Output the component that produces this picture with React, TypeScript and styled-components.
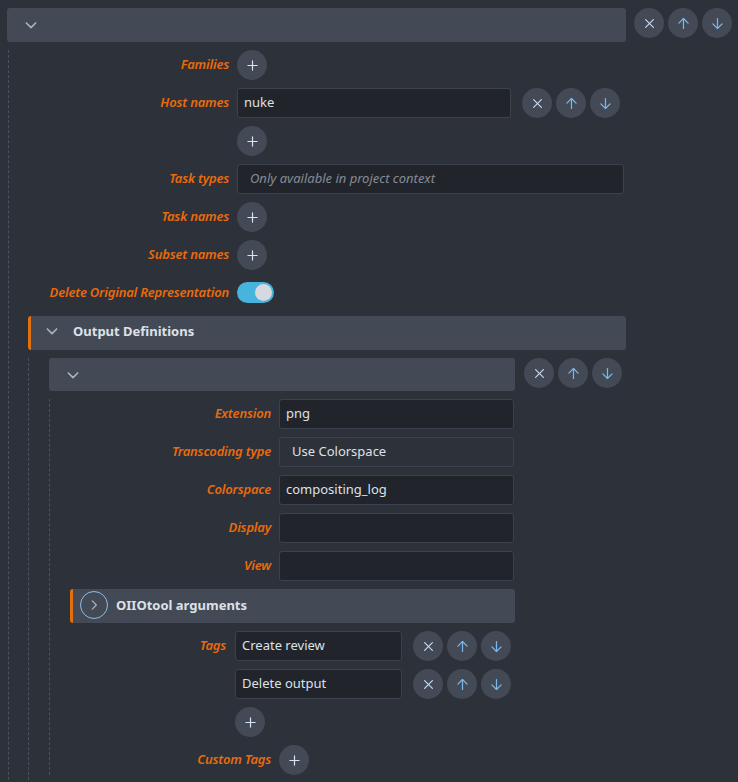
import React from "react";
import styled, { createGlobalStyle } from "styled-components";

const GlobalStyle = createGlobalStyle`
  html, body { margin: 0; padding: 0; background: #2d3139; }
  body { font-family: "Noto Sans", "DejaVu Sans", sans-serif; }
  * { box-sizing: border-box; }
`;

const Page = styled.div`
  padding: 8px 0 0 7px;
  height: 782px;
  overflow: hidden;
  display: flex;
  flex-direction: column;
  gap: 8px;
`;

const ItemRow = styled.div<{ $gap?: number }>`
  display: flex;
  align-items: flex-start;
  gap: ${(p) => p.$gap ?? 8}px;
`;

const HeaderBar = styled.div<{ $width: number; $height?: number; $indent?: number }>`
  width: ${(p) => p.$width}px;
  height: ${(p) => p.$height ?? 34}px;
  margin-left: ${(p) => p.$indent ?? 0}px;
  background: #434a56;
  border-radius: 3px;
  display: flex;
  align-items: center;
  padding-left: 16px;
  color: #aab1bc;
  flex-shrink: 0;
`;

const SectionBar = styled.div<{ $width: number; $indent: number; $gap?: number; $lift?: number }>`
  width: ${(p) => p.$width}px;
  height: 34px;
  margin-left: ${(p) => p.$indent}px;
  background: #434a56;
  border-left: 3px solid #e0710e;
  border-radius: 3px;
  display: flex;
  align-items: center;
  gap: ${(p) => p.$gap ?? 8}px;
  padding-left: 13px;
  padding-bottom: ${(p) => p.$lift ?? 1}px;
  color: #dde1e7;
  font-size: 13px;
  font-weight: 700;
`;

const CircleIcon = styled.span`
  width: 28px;
  height: 28px;
  border-radius: 50%;
  border: 1.5px solid #8dbde6;
  display: flex;
  align-items: center;
  justify-content: center;
  color: #aab1bc;
  margin-left: -6px;
`;

const Body = styled.div<{ $indent: number; $bottom?: number }>`
  margin-left: ${(p) => p.$indent}px;
  border-left: 1px dashed #4b515d;
  padding-bottom: ${(p) => p.$bottom ?? 0}px;
  display: flex;
  flex-direction: column;
  gap: 8px;
`;

const FieldRow = styled.div<{ $labelWidth: number; $gap?: number }>`
  display: grid;
  grid-template-columns: ${(p) => p.$labelWidth}px auto;
  column-gap: ${(p) => p.$gap ?? 8}px;
  align-items: start;
  justify-content: start;
`;

const Label = styled.div`
  text-align: right;
  line-height: 28px;
  height: 30px;
  font-size: 13px;
  font-style: italic;
  font-weight: 600;
  color: #ea6a0c;
  white-space: nowrap;
  letter-spacing: -0.2px;
`;

const ListColumn = styled.div`
  display: flex;
  flex-direction: column;
  gap: 8px;
  align-items: flex-start;
`;

const Input = styled.div<{ $width: number; $pad?: number; $dropdown?: boolean }>`
  width: ${(p) => p.$width}px;
  height: 30px;
  background: ${(p) => (p.$dropdown ? "#2d3139" : "#21242b")};
  border: 1px solid #3c424d;
  border-radius: 3px;
  padding: 0 ${(p) => p.$pad ?? 6}px 2px;
  display: flex;
  align-items: center;
  color: #dde1e7;
  font-size: 13px;
  flex-shrink: 0;
`;

const Placeholder = styled.span`
  color: #858b96;
  font-style: italic;
`;

const RoundButton = styled.button`
  width: 30px;
  height: 30px;
  border-radius: 50%;
  background: #434a56;
  border: none;
  padding: 0;
  display: flex;
  align-items: center;
  justify-content: center;
  flex-shrink: 0;
`;

const ButtonGroup = styled.div`
  display: flex;
  gap: 4px;
`;

const Toggle = styled.div`
  width: 37px;
  height: 21px;
  margin-top: 4px;
  border-radius: 11px;
  background: #46b4dc;
  position: relative;
`;

const Knob = styled.div`
  position: absolute;
  right: 2px;
  top: 2px;
  width: 17px;
  height: 17px;
  border-radius: 50%;
  background: #d6d9df;
`;

const Svg = ({ children, color }: { children: React.ReactNode; color: string }) => (
  <svg width="17" height="17" viewBox="0 0 24 24" fill="none" stroke={color} strokeWidth="1.7" strokeLinecap="round" strokeLinejoin="round">
    {children}
  </svg>
);

const XIcon = () => (
  <Svg color="#c3d8ef">
    <path d="M17.5 6.5 6.5 17.5" />
    <path d="m6.5 6.5 11 11" />
  </Svg>
);
const UpIcon = () => (
  <Svg color="#79b9ef">
    <path d="m5.5 11.5 6.5-6.5 6.5 6.5" />
    <path d="M12 19V5" />
  </Svg>
);
const DownIcon = () => (
  <Svg color="#79b9ef">
    <path d="M12 5v14" />
    <path d="m18.5 12.5-6.5 6.5-6.5-6.5" />
  </Svg>
);
const PlusIcon = () => (
  <Svg color="#d4e4f4">
    <path d="M5.5 12h13" />
    <path d="M12 5.5v13" />
  </Svg>
);
const ChevronDown = () => (
  <svg width="16" height="16" viewBox="0 0 24 24" fill="none" stroke="#aab1bc" strokeWidth="2.5" strokeLinecap="round" strokeLinejoin="round">
    <path d="m5 9 7 7 7-7" />
  </svg>
);
const ChevronRight = () => (
  <svg width="14" height="14" viewBox="0 0 24 24" fill="none" stroke="#aab1bc" strokeWidth="2.2" strokeLinecap="round" strokeLinejoin="round">
    <path d="m9 5 7 7-7 7" />
  </svg>
);

const Actions = () => (
  <ButtonGroup>
    <RoundButton><XIcon /></RoundButton>
    <RoundButton><UpIcon /></RoundButton>
    <RoundButton><DownIcon /></RoundButton>
  </ButtonGroup>
);

const Add = () => (
  <RoundButton><PlusIcon /></RoundButton>
);

export default function App() {
  return (
    <>
      <GlobalStyle />
      <Page>
        <ItemRow>
          <HeaderBar $width={619}><ChevronDown /></HeaderBar>
          <Actions />
        </ItemRow>
        <Body $indent={1} $bottom={40}>
          <FieldRow $labelWidth={220}>
            <Label>Families</Label>
            <Add />
          </FieldRow>
          <FieldRow $labelWidth={220}>
            <Label>Host names</Label>
            <ListColumn>
              <ItemRow $gap={11}>
                <Input $width={274}>nuke</Input>
                <Actions />
              </ItemRow>
              <Add />
            </ListColumn>
          </FieldRow>
          <FieldRow $labelWidth={220}>
            <Label>Task types</Label>
            <Input $width={387} $pad={12}><Placeholder>Only available in project context</Placeholder></Input>
          </FieldRow>
          <FieldRow $labelWidth={220}>
            <Label>Task names</Label>
            <Add />
          </FieldRow>
          <FieldRow $labelWidth={220}>
            <Label>Subset names</Label>
            <Add />
          </FieldRow>
          <FieldRow $labelWidth={220}>
            <Label>Delete Original Representation</Label>
            <Toggle><Knob /></Toggle>
          </FieldRow>
          <SectionBar $width={598} $indent={19} $gap={13} $lift={4}>
            <ChevronDown />
            <span>Output Definitions</span>
          </SectionBar>
          <Body $indent={19} $bottom={40}>
            <ItemRow $gap={9}>
              <HeaderBar $width={466} $height={33} $indent={20}><ChevronDown /></HeaderBar>
              <Actions />
            </ItemRow>
            <Body $indent={20}>
              <FieldRow $labelWidth={221}>
                <Label>Extension</Label>
                <Input $width={235}>png</Input>
              </FieldRow>
              <FieldRow $labelWidth={221}>
                <Label>Transcoding type</Label>
                <Input $width={235} $pad={12} $dropdown>Use Colorspace</Input>
              </FieldRow>
              <FieldRow $labelWidth={221}>
                <Label>Colorspace</Label>
                <Input $width={235}>compositing_log</Input>
              </FieldRow>
              <FieldRow $labelWidth={221}>
                <Label>Display</Label>
                <Input $width={235} />
              </FieldRow>
              <FieldRow $labelWidth={221}>
                <Label>View</Label>
                <Input $width={235} />
              </FieldRow>
              <SectionBar $width={445} $indent={20} $lift={2}>
                <CircleIcon><ChevronRight /></CircleIcon>
                <span>OIIOtool arguments</span>
              </SectionBar>
              <FieldRow $labelWidth={176} $gap={9}>
                <Label>Tags</Label>
                <ListColumn>
                  <ItemRow $gap={11}>
                    <Input $width={167}>Create review</Input>
                    <Actions />
                  </ItemRow>
                  <ItemRow $gap={11}>
                    <Input $width={167}>Delete output</Input>
                    <Actions />
                  </ItemRow>
                  <Add />
                </ListColumn>
              </FieldRow>
              <FieldRow $labelWidth={221}>
                <Label>Custom Tags</Label>
                <Add />
              </FieldRow>
            </Body>
          </Body>
        </Body>
      </Page>
    </>
  );
}
